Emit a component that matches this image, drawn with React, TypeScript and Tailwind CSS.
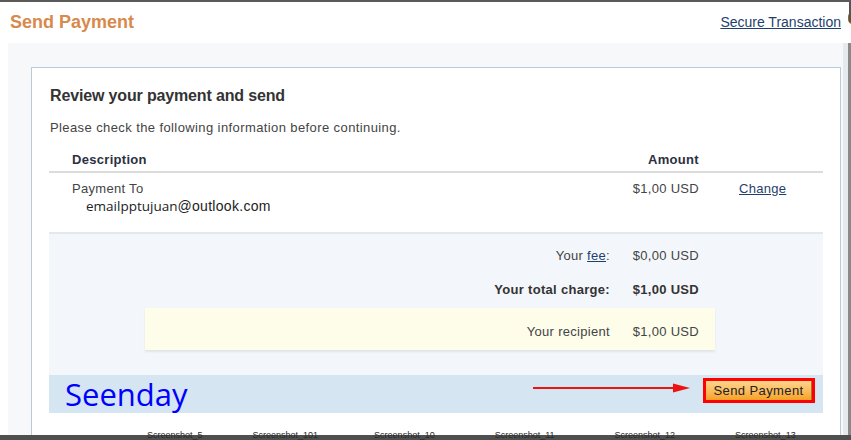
import React from 'react';

const arial = { fontFamily: '"Liberation Sans", Arial, sans-serif' };

function SummaryRow({ label, value, bold }: { label: React.ReactNode; value: string; bold?: boolean }) {
  return (
    <div
      className={`flex h-[34px] items-center text-[13px] tracking-[0.3px] ${bold ? 'font-bold text-[#333]' : 'text-[#444]'}`}
    >
      <div className="w-[561px] text-right">{label}</div>
      <div className="ml-[20px] w-[69px] text-right">{value}</div>
    </div>
  );
}

export default function App() {
  return (
    <div className="relative h-[440px] w-[851px] overflow-hidden bg-white" style={arial}>
      <div className="h-[2px] bg-[#5a5a5a]" />

      {/* page header */}
      <div className="flex h-[41px] items-center justify-between pl-[10px] pr-[10px]">
        <div className="text-[18px] font-bold text-[#d8894c]">Send Payment</div>
        <a href="#" className="text-[14px] text-[#1f3f6e] underline">
          Secure Transaction
        </a>
      </div>
      <div className="absolute right-[-6px] top-[12px] h-[12px] w-[9px] rounded-full border-2 border-[#9a6a1c] bg-[#e0a030]" />
      <div className="absolute right-0 top-[2px] h-[20px] w-[2px] bg-[#555]" />

      <div className="flex h-full">
        {/* gray frame */}
        <div className="ml-[8px] h-full w-[835px] bg-[#f7f8f9] pl-[23px] pr-[2px] pt-[24px]">
          <div className="h-full border border-[#b9cadb] bg-white px-[17px] pt-[18px]">
            <div className="pl-[1px] text-[16px] font-bold leading-[20px] tracking-[-0.15px] text-[#333]">
              Review your payment and send
            </div>
            <div className="mt-[13px] pl-[1px] text-[13px] leading-[18px] tracking-[0.4px] text-[#444]">
              Please check the following information before continuing.
            </div>

            {/* table header */}
            <div className="mt-[14px] flex items-center border-b-2 border-[#dcdcdc] pb-[2px] text-[13px] font-bold leading-[18px] tracking-[0.3px] text-[#2c3040]">
              <div className="flex-1 pl-[23px]">Description</div>
              <div className="w-[124px] shrink-0">
                <span className="ml-[-51px]">Amount</span>
              </div>
            </div>

            {/* row */}
            <div className="flex pt-[7px] text-[13px] tracking-[0.3px] text-[#444]">
              <div className="flex-1 pl-[23px]">
                <div className="leading-[18px]">Payment To</div>
                <div className="pl-[14px] leading-[17px] tracking-normal text-[#222]">
                  <span style={{ fontFamily: '"Open Sans", "DejaVu Sans", sans-serif' }} className="text-[13.5px]">
                    emailpptujuan
                  </span>
                  <span className="text-[14px] tracking-[0.3px]">@outlook.com</span>
                </div>
              </div>
              <div className="leading-[18px]">$1,00 USD</div>
              <div className="w-[124px] shrink-0 pl-[40px] leading-[18px]">
                <a href="#" className="text-[#1f3f6e] underline">
                  Change
                </a>
              </div>
            </div>

            {/* summary */}
            <div className="mt-[17px] border-t-2 border-[#e3e8ef] bg-[#f3f7fb] pt-[5px]">
              <SummaryRow
                label={
                  <>
                    Your{' '}
                    <a href="#" className="text-[#1f3f6e] underline">
                      fee
                    </a>
                    :
                  </>
                }
                value="$0,00 USD"
              />
              <SummaryRow label="Your total charge:" value="$1,00 USD" bold />
              <div className="ml-[96px] mt-[1px] w-[570px] bg-[#fdfdea] pt-[5px] shadow-[0_2px_2px_rgba(0,0,0,0.08)]">
                <div className="flex h-[37px] items-center text-[13px] tracking-[0.3px] text-[#444]">
                  <div className="w-[465px] text-right">Your recipient</div>
                  <div className="ml-[20px] w-[69px] text-right">$1,00 USD</div>
                </div>
              </div>
              <div className="h-[25px]" />

              {/* action bar */}
              <div className="flex h-[38px] items-start bg-[#d5e5f2] pl-[16px] pr-[8px]">
                <div
                  className="flex-1 self-center text-[31px] leading-none text-[#0000ff]"
                  style={{ fontFamily: '"Open Sans", "Noto Sans", sans-serif' }}
                >
                  Seenday
                </div>
                <svg width="158" height="12" viewBox="0 0 158 12" className="mr-[12px] mt-[7px]">
                  <line x1="0" y1="6" x2="142" y2="6" stroke="#ee1111" strokeWidth="2" />
                  <polygon points="140,1.5 157,6 140,10.5" fill="#ee1111" />
                </svg>
                <div className="mt-[3px] border-[3px] border-[#ff0000]">
                  <button className="block h-[19px] w-[106px] border-r border-[#a8741e] bg-gradient-to-b from-[#ffd58c] to-[#f6a21e] text-[13px] tracking-[0.4px] text-[#222]">
                    Send Payment
                  </button>
                </div>
              </div>
            </div>
          </div>
        </div>
        {/* window edge */}
        <div className="h-full w-[5px] bg-[#e6e9ee]" />
        <div className="h-full w-[3px] bg-[#8a8a8a]" />
      </div>

      {/* taskbar strip behind */}
      <div className="absolute bottom-0 left-0 h-[5px] w-full bg-[#4f4f4f]" />
      <div className="absolute bottom-0 left-0 flex h-[10px] w-full items-end overflow-hidden text-[9px] leading-[10px] text-[#2a2a2a]">
        <span className="ml-[147px]">Screenshot_5</span>
        <span className="ml-[50px]">Screenshot_101</span>
        <span className="ml-[56px]">Screenshot_10</span>
        <span className="ml-[60px]">Screenshot_11</span>
        <span className="ml-[60px]">Screenshot_12</span>
        <span className="ml-[60px]">Screenshot_13</span>
      </div>
    </div>
  );
}
